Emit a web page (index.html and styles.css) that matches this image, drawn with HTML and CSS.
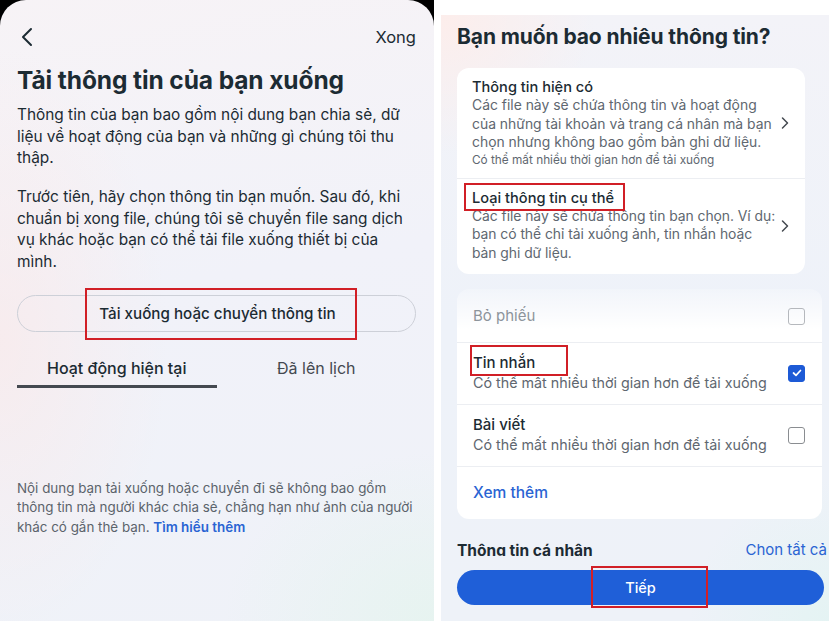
FILE: index.html
```html
<!DOCTYPE html>
<html lang="vi">
<head>
<meta charset="utf-8">
<title>Tải thông tin</title>
<link rel="stylesheet" href="styles.css">
</head>
<body>
<div class="page">
  <div class="left">
    <div class="screen">
      <div class="topbar">
        <svg class="back" width="14" height="20" viewBox="0 0 14 20"><path d="M11 2 L3 10 L11 18" fill="none" stroke="#1c2b33" stroke-width="2" stroke-linecap="round" stroke-linejoin="round"/></svg>
        <span class="done">Xong</span>
      </div>
      <h1 class="title">Tải thông tin của bạn xuống</h1>
      <p class="para">Thông tin của bạn bao gồm nội dung bạn chia sẻ, dữ liệu về hoạt động của bạn và những gì chúng tôi thu thập.</p>
      <p class="para para2">Trước tiên, hãy chọn thông tin bạn muốn. Sau đó, khi chuẩn bị xong file, chúng tôi sẽ chuyển file sang dịch vụ khác hoặc bạn có thể tải file xuống thiết bị của mình.</p>
      <div class="pill">
        <span class="pill-text">Tải xuống hoặc chuyển thông tin</span>
        <span class="mark mark-pill"></span>
      </div>
      <div class="tabs">
        <div class="tab active">Hoạt động hiện tại</div>
        <div class="tab">Đã lên lịch</div>
      </div>
      <p class="note">Nội dung bạn tải xuống hoặc chuyển đi sẽ không bao gồm thông tin mà người khác chia sẻ, chẳng hạn như ảnh của người khác có gắn thẻ bạn. <a class="link">Tìm hiểu thêm</a></p>
    </div>
  </div>
  <div class="right">
    <div class="panel">
      <h2 class="rtitle">Bạn muốn bao nhiêu thông tin?</h2>
      <div class="card card1">
        <div class="opt">
          <div class="opt-body">
            <div class="opt-title">Thông tin hiện có</div>
            <div class="opt-desc">Các file này sẽ chứa thông tin và hoạt động của những tài khoản và trang cá nhân mà bạn chọn nhưng không bao gồm bản ghi dữ liệu.</div>
            <div class="opt-small">Có thể mất nhiều thời gian hơn để tải xuống</div>
          </div>
          <svg class="chev" width="10" height="14" viewBox="0 0 10 14"><path d="M2.5 2 L7.5 7 L2.5 12" fill="none" stroke="#444950" stroke-width="1.5" stroke-linecap="round" stroke-linejoin="round"/></svg>
        </div>
        <div class="opt opt2">
          <div class="opt-body">
            <div class="opt-title"><span class="boxed">Loại thông tin cụ thể<span class="mark mark-type"></span></span></div>
            <div class="opt-desc opt-desc2">Các file này sẽ chứa thông tin bạn chọn. Ví dụ: bạn có thể chỉ tải xuống ảnh, tin nhắn hoặc bản ghi dữ liệu.</div>
          </div>
          <svg class="chev" width="10" height="14" viewBox="0 0 10 14"><path d="M2.5 2 L7.5 7 L2.5 12" fill="none" stroke="#444950" stroke-width="1.5" stroke-linecap="round" stroke-linejoin="round"/></svg>
        </div>
      </div>
      <div class="card card2">
        <div class="row row-faded">
          <div class="row-body"><div class="row-title faded">Bỏ phiếu</div></div>
          <span class="check"></span>
        </div>
        <div class="row">
          <div class="row-body">
            <div class="row-title"><span class="boxed">Tin nhắn<span class="mark mark-msg"></span></span></div>
            <div class="row-desc">Có thể mất nhiều thời gian hơn để tải xuống</div>
          </div>
          <span class="check checked"><svg width="10" height="8" viewBox="0 0 10 8"><path d="M1.5 4 L4 6.3 L8.5 1.5" fill="none" stroke="#fff" stroke-width="1.7" stroke-linecap="round" stroke-linejoin="round"/></svg></span>
        </div>
        <div class="row">
          <div class="row-body">
            <div class="row-title">Bài viết</div>
            <div class="row-desc">Có thể mất nhiều thời gian hơn để tải xuống</div>
          </div>
          <span class="check"></span>
        </div>
        <div class="more">Xem thêm</div>
      </div>
      <div class="section">
        <span class="section-title">Thông tin cá nhân</span>
        <span class="select-all">Chọn tất cả</span>
      </div>
      <div class="footer">
        <div class="next">
          <span>Tiếp</span>
          <span class="mark mark-next"></span>
        </div>
      </div>
    </div>
  </div>
</div>
</body>
</html>
```

FILE: styles.css
```css
* { box-sizing: border-box; }
html, body { margin: 0; padding: 0; }
body {
  width: 829px;
  height: 621px;
  overflow: hidden;
  background: #ffffff;
  font-family: Inter, "Noto Sans", sans-serif;
  color: #1c2b33;
}
.page {
  display: flex;
  width: 829px;
  height: 621px;
}

/* ---------- left phone ---------- */
.left {
  width: 434px;
  height: 621px;
  background: #000;
  flex: none;
}
.screen {
  height: 621px;
  border-radius: 26px 26px 0 0;
  padding: 27px 18px 0 17px;
  background:
    radial-gradient(ellipse 240px 420px at 0% 55%, rgba(255, 228, 224, 0.45), rgba(255, 228, 224, 0) 70%),
    radial-gradient(ellipse 300px 240px at 100% 100%, rgba(222, 245, 232, 0.5), rgba(222, 245, 232, 0) 70%),
    linear-gradient(170deg, #f7f3f6 0%, #f1f2f9 45%, #eff2f8 100%);
}
.topbar {
  display: flex;
  justify-content: space-between;
  align-items: center;
  height: 20px;
}
.back { margin-left: 3px; }
.done {
  font-size: 16.5px;
  color: #1c2b33;
}
.title {
  margin: 18px 0 0;
  font-size: 24.5px;
  line-height: 30px;
  font-weight: 700;
  letter-spacing: -0.1px;
  color: #1c2b33;
}
.para {
  margin: 9px 0 0;
  font-size: 15.4px;
  line-height: 21.5px;
  color: #1c2b33;
}
.para2 { margin-top: 17.5px; }
.pill {
  position: relative;
  margin-top: 23px;
  height: 37px;
  border: 1px solid #cdd0d8;
  border-radius: 19px;
  display: flex;
  align-items: center;
  justify-content: center;
  padding-left: 2px;
}
.pill-text {
  font-size: 15.2px;
  font-weight: 500;
  color: #1c2b33;
}
.mark {
  position: absolute;
  border: 2px solid #d11f26;
  pointer-events: none;
}
.mark-pill {
  left: 67px;
  width: 272px;
  top: -8px;
  height: 52px;
}
.tabs {
  display: flex;
  margin-top: 26px;
}
.tab {
  width: 200px;
  text-align: center;
  font-size: 16px;
  line-height: 20px;
  padding-bottom: 7px;
  border-bottom: 3px solid transparent;
  color: #444950;
  font-weight: 400;
}
.tab.active {
  color: #1c2b33;
  font-weight: 500;
  border-bottom-color: #444950;
}
.note {
  margin: 91px 0 0;
  font-size: 13.4px;
  line-height: 19.3px;
  color: #5b636b;
}
.link {
  color: #2a64d3;
  font-weight: 600;
}

/* ---------- right phone ---------- */
.right {
  flex: 1;
  padding: 15px 0 0 7px;
  background: #ffffff;
}
.panel {
  height: 606px;
  padding: 0 0 0 16px;
  background:
    radial-gradient(ellipse 220px 200px at 0% 0%, rgba(255, 236, 232, 0.8), rgba(255, 236, 232, 0) 70%),
    radial-gradient(ellipse 200px 200px at 100% 100%, rgba(222, 244, 240, 0.6), rgba(222, 244, 240, 0) 70%),
    linear-gradient(180deg, #f3f3f8 0%, #eef2f9 50%, #eef2f8 100%);
  display: flex;
  flex-direction: column;
}
.rtitle {
  margin: 9px 0 0;
  font-size: 21px;
  line-height: 26px;
  font-weight: 700;
  color: #1c2b33;
  letter-spacing: -0.1px;
}
.card {
  background: #fff;
  border-radius: 12px;
}
.card1 {
  margin-top: 18px;
  width: 348px;
}
.opt {
  display: flex;
  align-items: center;
  padding: 10px 16px 10px 15px;
  border-bottom: 1px solid #eceef2;
}
.opt2 {
  border-bottom: none;
  padding-top: 10px;
  padding-bottom: 11px;
}
.opt-body { flex: 1; }
.opt-title {
  font-size: 14.6px;
  line-height: 18px;
  font-weight: 500;
  color: #1c2b33;
}
.opt-desc {
  font-size: 13.9px;
  line-height: 18.6px;
  color: #606770;
  width: 308px;
}
.opt-desc2 { width: 308px; letter-spacing: -0.05px; }
.opt-small {
  font-size: 11.8px;
  line-height: 16px;
  color: #606770;
}
.chev { flex: none; margin-left: 0; }
.boxed { position: relative; display: inline-block; }
.mark-type {
  left: -8px;
  right: -11px;
  top: -6px;
  bottom: -4px;
}
.card2 {
  margin-top: 15px;
  width: 365px;
  background: linear-gradient(180deg, rgba(255,255,255,0.2) 0%, #ffffff 40px);
}
.row {
  display: flex;
  align-items: center;
  padding: 11px 17px 11px 16px;
  border-bottom: 1px solid #eceef2;
}
.row-faded {
  height: 54px;
  padding-top: 2px;
  padding-bottom: 0;
}
.row-body { flex: 1; }
.row-title {
  font-size: 15px;
  line-height: 18px;
  font-weight: 500;
  color: #1c2b33;
}
.row-title.faded { color: #8d949b; font-weight: 400; }
.row-desc {
  font-size: 14.3px;
  line-height: 21px;
  color: #606770;
}
.check {
  flex: none;
  width: 17px;
  height: 17px;
  border: 1.6px solid #8a8d91;
  border-radius: 3px;
  display: flex;
  align-items: center;
  justify-content: center;
}
.row-faded .check { border-color: #b5b8bd; }
.check.checked {
  background: #1d5ad6;
  border-color: #1d5ad6;
}
.mark-msg {
  left: -3px;
  right: -33px;
  top: -9px;
  bottom: -4px;
}
.more {
  height: 52px;
  display: flex;
  align-items: center;
  padding-left: 16px;
  padding-bottom: 1px;
  font-size: 15.5px;
  font-weight: 500;
  color: #2a64d3;
}
.section {
  margin-top: 22px;
  height: 15px;
  overflow: hidden;
  display: flex;
  justify-content: space-between;
  align-items: flex-start;
  width: 370px;
}
.section-title {
  font-size: 15.5px;
  line-height: 20px;
  font-weight: 700;
  color: #1c2b33;
}
.select-all {
  font-size: 15px;
  line-height: 20px;
  color: #2a64d3;
  margin-top: -1px;
}
.footer {
  padding-top: 14px;
}
.next {
  position: relative;
  width: 367px;
  height: 35px;
  border-radius: 18px;
  background: #1f5fd8;
  color: #fff;
  display: flex;
  align-items: center;
  justify-content: center;
  font-size: 14.5px;
  font-weight: 500;
}
.mark-next {
  left: 134px;
  width: 117px;
  top: -4px;
  height: 42px;
}
```
